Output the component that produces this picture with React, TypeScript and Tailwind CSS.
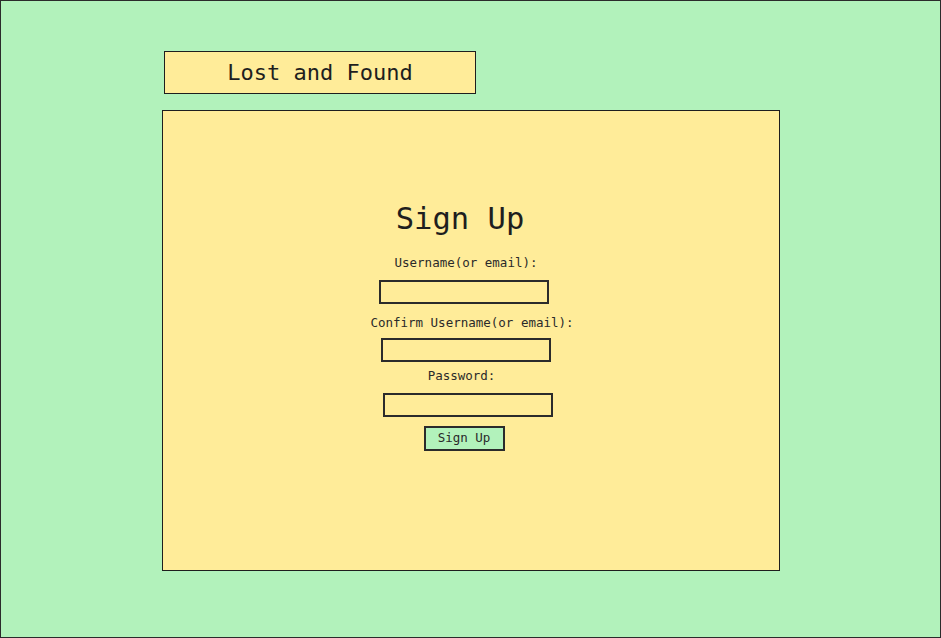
const mono = { fontFamily: '"DejaVu Sans Mono", "Liberation Mono", monospace' };

const Field: React.FC<{ label: string; labelClass: string; inputClass: string }> = ({ label, labelClass, inputClass }) => {
  return (
    <>
      <label className={`text-[12.5px] leading-[16px] text-[#2a2a2a] ${labelClass}`}>{label}</label>
      <input
        type="text"
        className={`w-[170px] h-[24px] border-2 border-[#2b2b2b] bg-transparent outline-none ${inputClass}`}
      />
    </>
  );
};

export default function App() {
  return (
    <div
      style={mono}
      className="w-[941px] h-[638px] bg-[#b2f2bb] border border-[#2b2b2b] box-border pt-[50px] pl-[161px] flex flex-col text-[#1e1e1e]"
    >
      <div className="ml-[2px] w-[312px] h-[43px] bg-[#ffec99] border-[1.5px] border-[#1e1e1e] flex items-center justify-center">
        <span className="text-[22px] leading-none">Lost and Found</span>
      </div>

      <div className="mt-[16px] w-[618px] h-[461px] bg-[#ffec99] border-[1.5px] border-[#1e1e1e] flex flex-col items-center pt-[90px] pr-[10px]">
        <h1 className="text-[30.5px] leading-[36px] mr-[12px]">Sign Up</h1>
        <Field label="Username(or email):" labelClass="mt-[18px]" inputClass="mt-[9px] mr-[5px]" />
        <Field label="Confirm Username(or email):" labelClass="mt-[11px] ml-[12px]" inputClass="mt-[7px]" />
        <Field label="Password:" labelClass="mt-[6px] mr-[9px]" inputClass="mt-[9px] ml-[3px]" />
        <button className="mt-[9px] mr-[4px] w-[81px] h-[25px] bg-[#b2f2bb] border-2 border-[#2b2b2b] text-[12.5px] leading-none text-[#2a2a2a]">
          Sign Up
        </button>
      </div>
    </div>
  );
}
